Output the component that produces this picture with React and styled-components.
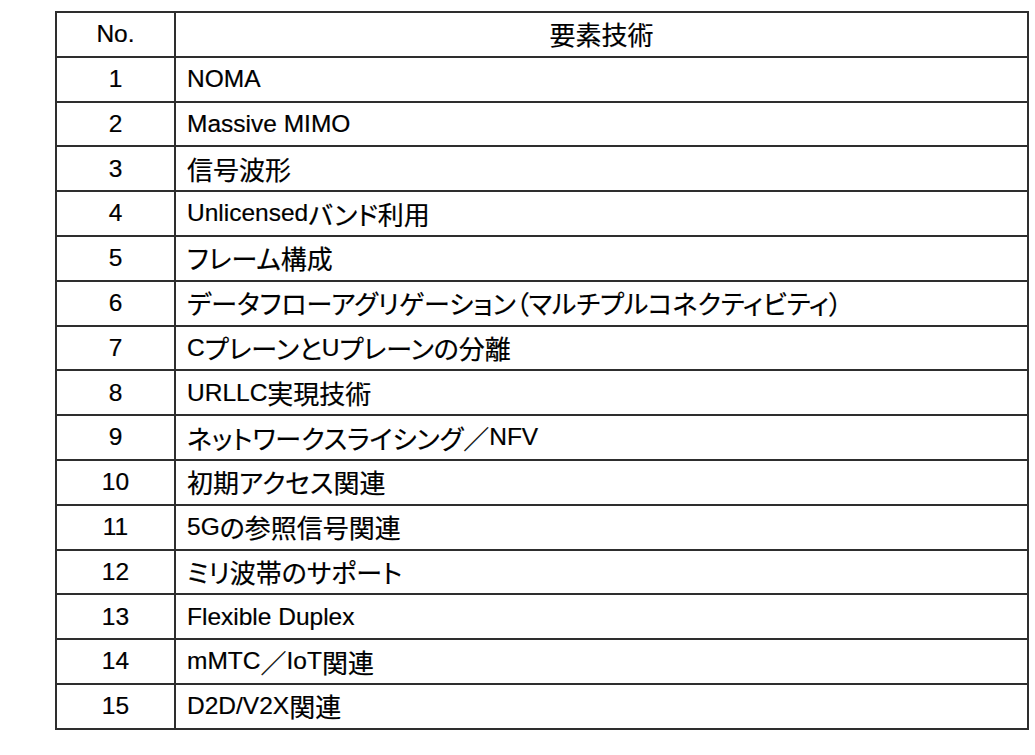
import React from 'react'
import styled, { createGlobalStyle } from 'styled-components'

const GlobalStyle = createGlobalStyle`
    html, body {
        margin: 0;
        padding: 0;
        background: #ffffff;
    }
    body {
        font-family: "Liberation Sans", Arial, "Noto Sans CJK JP", sans-serif;
        color: #000;
    }
`

const Page = styled.div`
    width: 1035px;
    height: 755px;
    padding: 11px 0 0 55px;
    box-sizing: border-box;
`

const Table = styled.div`
    display: grid;
    grid-template-columns: 119px 1fr;
    grid-auto-rows: 44.8px;
    width: 974px;
    border-top: 2px solid #2e2e2e;
    border-left: 2px solid #2e2e2e;
    box-sizing: border-box;
`

const Cell = styled.div`
    display: flex;
    align-items: center;
    justify-content: ${(props) => props.center ? "center" : "flex-start"};
    padding: ${(props) => props.center ? "0" : "0 0 0 11px"};
    border-right: 2px solid #2e2e2e;
    border-bottom: 2px solid #2e2e2e;
    font-size: 24.5px;
    line-height: 1;
    white-space: nowrap;
    overflow: hidden;
    -webkit-text-stroke: 0.2px #000;
`

const Jp = styled.span`
    font-family: "Noto Sans CJK JP", sans-serif;
    font-size: 26px;
    font-feature-settings: "palt";
`

const rows = [
    "NOMA",
    "Massive MIMO",
    "信号波形",
    "Unlicensedバンド利用",
    "フレーム構成",
    "データフローアグリゲーション（マルチプルコネクティビティ）",
    "CプレーンとUプレーンの分離",
    "URLLC実現技術",
    "ネットワークスライシング／NFV",
    "初期アクセス関連",
    "5Gの参照信号関連",
    "ミリ波帯のサポート",
    "Flexible Duplex",
    "mMTC／IoT関連",
    "D2D/V2X関連",
]

// split text into latin and japanese runs so each gets its own font
const Mixed = ({ text }) => {
    const parts = text.split(/([\u3000-\u30ff\u4e00-\u9fff\uff00-\uffef]+)/)
    return parts.map((p, i) =>
        /[\u3000-\u30ff\u4e00-\u9fff\uff00-\uffef]/.test(p)
            ? <Jp key={i}>{p}</Jp>
            : p ? <span key={i}>{p}</span> : null
    )
}

const App = () => {
    return (
        <>
            <GlobalStyle />
            <Page>
                <Table>
                    <Cell center>No.</Cell>
                    <Cell center><Mixed text="要素技術" /></Cell>
                    {rows.map((r, i) => (
                        <React.Fragment key={i}>
                            <Cell center>{i + 1}</Cell>
                            <Cell><Mixed text={r} /></Cell>
                        </React.Fragment>
                    ))}
                </Table>
            </Page>
        </>
    )
}

export default App
